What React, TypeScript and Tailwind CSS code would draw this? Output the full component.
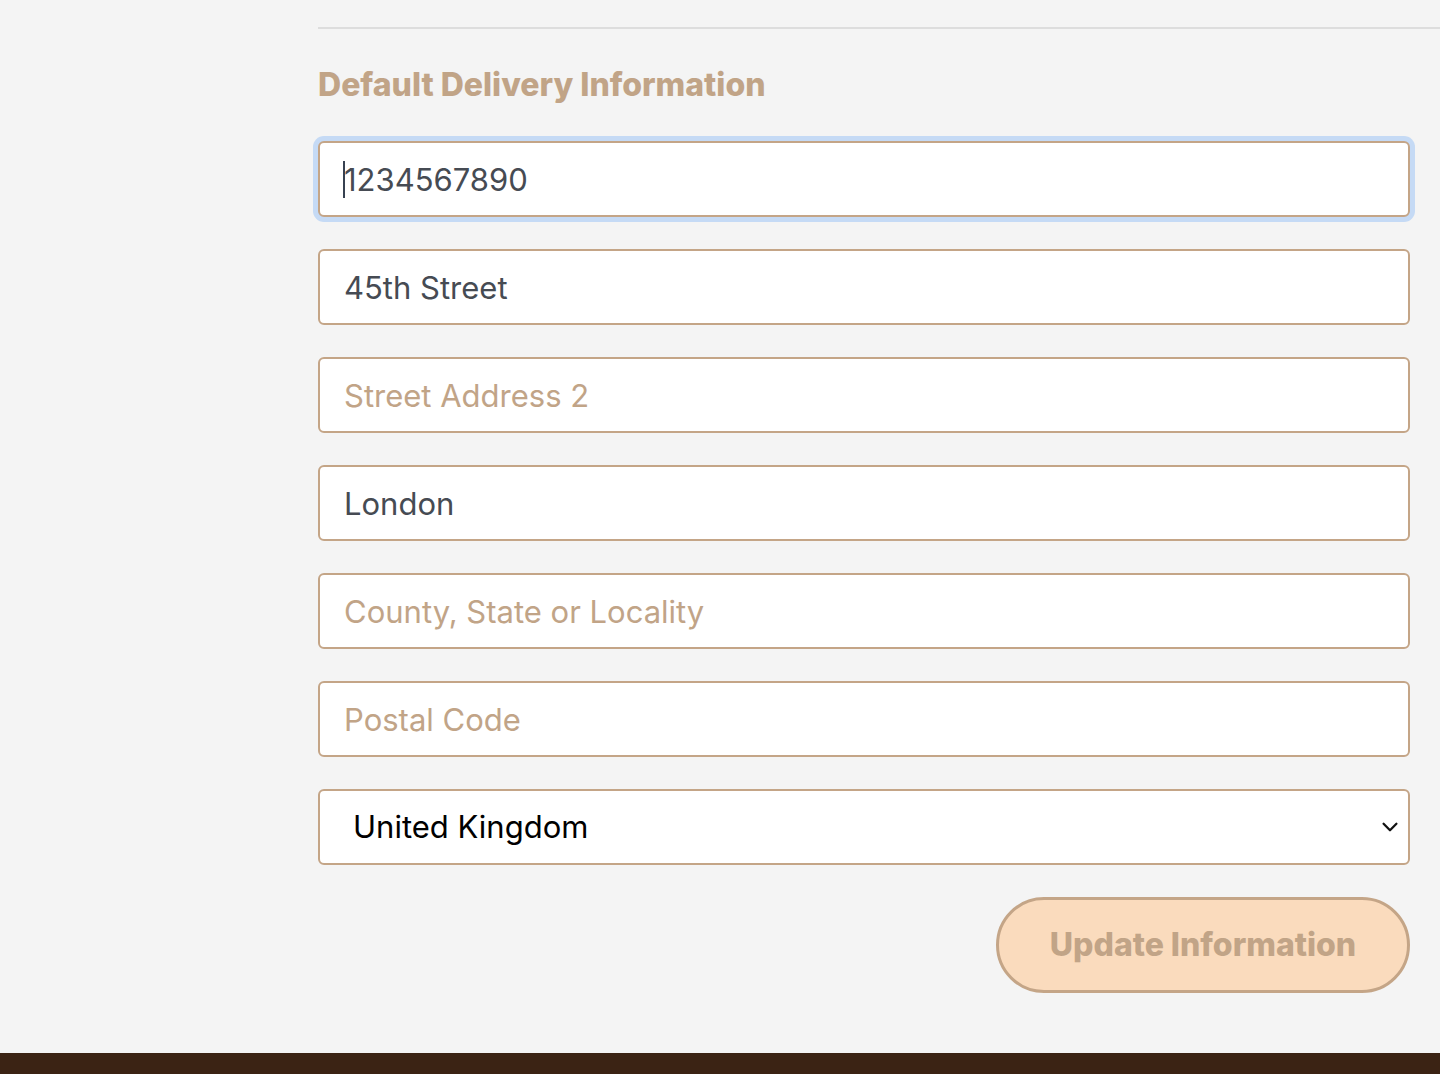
import React from "react";

const fields = [
  { value: "1234567890", placeholder: "Phone Number", focused: true },
  { value: "45th Street", placeholder: "Street Address 1" },
  { value: "", placeholder: "Street Address 2" },
  { value: "London", placeholder: "Town or City" },
  { value: "", placeholder: "County, State or Locality" },
  { value: "", placeholder: "Postal Code" },
];

export default function App() {
  return (
    <div className="min-h-[1074px] bg-[#f4f4f4] flex flex-col font-['Inter',sans-serif]">
      <div className="flex-1 pl-[318px] pr-[30px]">
        <div className="pt-[27px]">
          <div className="h-[2px] bg-[#dddddd] -mr-[30px]" />
        </div>
        <h2 className="mt-[36px] text-[32px] leading-[40px] font-extrabold tracking-[0px] text-[#c1a487]">
          Default Delivery Information
        </h2>
        <form className="mt-[36px] flex flex-col gap-[32px]">
          {fields.map((f, i) => (
            <div key={i} className="relative">
              <input
                defaultValue={f.value}
                placeholder={f.placeholder}
                className={
                  "w-full h-[76px] rounded-[6px] border-2 border-[#c4a587] bg-white pl-[24px] pr-4 text-[31px] text-[#464b53] placeholder:text-[#c1a487] outline-none" +
                  (f.focused ? " ring-[5px] ring-[#c5daf5]" : "")
                }
              />
              {f.focused && (
                <span className="absolute left-[25px] top-[20px] h-[37px] w-[2px] bg-[#374151]" />
              )}
            </div>
          ))}
          <div className="relative">
            <select
              defaultValue="GB"
              className="w-full h-[76px] appearance-none rounded-[6px] border-2 border-[#c4a587] bg-white pl-[33px] pr-12 text-[31px] text-black outline-none"
            >
              <option value="GB">United Kingdom</option>
              <option value="US">United States</option>
            </select>
            <svg
              className="pointer-events-none absolute right-[9px] top-1/2 -translate-y-1/2"
              width="22"
              height="22"
              viewBox="0 0 24 24"
              fill="none"
              stroke="#111"
              strokeWidth="2.5"
              strokeLinecap="round"
              strokeLinejoin="round"
            >
              <path d="M5 8.5l7 7 7-7" />
            </svg>
          </div>
          <div className="flex justify-end">
            <button
              type="button"
              className="h-[96px] w-[414px] rounded-full border-[3px] border-[#c4a587] bg-[#fadbbd] text-[32px] font-extrabold text-[#c1a487]"
            >
              Update Information
            </button>
          </div>
        </form>
      </div>
      <div className="mt-[60px] h-[21px] bg-[#3b2314]" />
    </div>
  );
}
